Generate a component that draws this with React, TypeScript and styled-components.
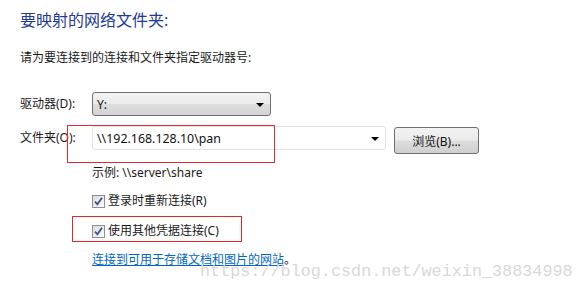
import React from 'react';
import styled, { createGlobalStyle } from 'styled-components';

const GlobalStyle = createGlobalStyle`
  html, body {
    margin: 0;
    padding: 0;
    background: #fff;
  }
  body {
    font-family: "Noto Sans", "Noto Sans CJK SC", sans-serif;
    font-size: 12px;
    color: #1a1a1a;
  }
`;

const Page = styled.div`
  position: relative;
  width: 584px;
  height: 292px;
  overflow: hidden;
  padding: 10px 0 0 20px;
  box-sizing: border-box;
`;

const Title = styled.div`
  font-size: 16px;
  line-height: 20px;
  color: #1d3a9b;
`;

const Intro = styled.div`
  margin-top: 20px;
  line-height: 16px;
`;

const Form = styled.div`
  margin-top: 26px;
  display: grid;
  grid-template-columns: 72px auto;
  grid-template-rows: 24px 28px;
  row-gap: 10px;
  align-items: start;
`;

const Label = styled.div`
  line-height: 24px;
`;

const Row = styled.div`
  display: flex;
  align-items: flex-start;
  gap: 8px;
`;

type SelectProps = {
  $width: number;
  $editable?: boolean;
};

const Select = styled.div<SelectProps>`
  position: relative;
  box-sizing: border-box;
  width: ${({ $width }) => $width}px;
  height: 24px;
  padding: 0 20px 0 4px;
  display: flex;
  align-items: center;
  border-radius: 3px;
  border: 1px solid ${({ $editable }) => ($editable ? '#dde3ea' : '#707070')};
  background: ${({ $editable }) =>
    $editable ? '#fff' : 'linear-gradient(#f3f3f3 0%, #ebebeb 48%, #dddddd 52%, #d4d4d4 100%)'};
  font-size: ${({ $editable }) => ($editable ? '12.4px' : '12px')};
  color: #111;
`;

const Arrow = styled.span`
  position: absolute;
  right: 6px;
  top: 10px;
  width: 0;
  height: 0;
  border-left: 4px solid transparent;
  border-right: 4px solid transparent;
  border-top: 4px solid #000;
`;

const Button = styled.button`
  box-sizing: border-box;
  margin-top: 1px;
  width: 85px;
  height: 27px;
  border: 1px solid #707070;
  border-radius: 3px;
  background: linear-gradient(#f2f2f2 0%, #ebebeb 48%, #dddddd 52%, #cfcfcf 100%);
  font-family: "Noto Sans", "Noto Sans CJK SC", sans-serif;
  font-size: 12px;
  color: #111;
  padding: 0;
`;

const Options = styled.div`
  margin-left: 72px;
  display: flex;
  flex-direction: column;
`;

type LineProps = {
  $top: number;
};

const Line = styled.div<LineProps>`
  margin-top: ${({ $top }) => $top}px;
  line-height: 16px;
  display: flex;
  align-items: center;
  gap: 3px;
`;

const Box = styled.span`
  box-sizing: border-box;
  width: 13px;
  height: 13px;
  border: 1px solid #8e8f8f;
  background: linear-gradient(135deg, #dcdcdc, #fbfbfb);
  display: inline-flex;
  align-items: center;
  justify-content: center;
`;

const Link = styled.a`
  color: #0066cc;
  text-decoration: underline;
`;

const Mark = styled.div<{ $x: number; $y: number; $w: number; $h: number }>`
  position: absolute;
  left: ${({ $x }) => $x}px;
  top: ${({ $y }) => $y}px;
  width: ${({ $w }) => $w}px;
  height: ${({ $h }) => $h}px;
  box-sizing: border-box;
  border: 1px solid #e8262b;
  pointer-events: none;
`;

const Watermark = styled.div`
  position: absolute;
  left: 200px;
  top: 262px;
  font-family: "Liberation Mono", monospace;
  font-size: 16.8px;
  line-height: 20px;
  color: #d8d8d8;
  white-space: nowrap;
`;

const Check: React.FC<{ label: string; top: number }> = ({ label, top }) => (
  <Line $top={top}>
    <Box>
      <svg width="9" height="9" viewBox="0 0 9 9">
        <path d="M1 4.6 L3.4 7.3 L8 0.8" fill="none" stroke="#3b4f93" strokeWidth="1.7" />
      </svg>
    </Box>
    <span>{label}</span>
  </Line>
);

export default function App() {
  return (
    <>
      <GlobalStyle />
      <Page>
        <Title>要映射的网络文件夹:</Title>
        <Intro>请为要连接到的连接和文件夹指定驱动器号:</Intro>
        <Form>
          <Label>驱动器(D):</Label>
          <Select $width={179}>
            Y:
            <Arrow />
          </Select>
          <Label>文件夹(O):</Label>
          <Row>
            <Select $width={294} $editable>
              \\192.168.128.10\pan
              <Arrow />
            </Select>
            <Button>浏览(B)...</Button>
          </Row>
        </Form>
        <Options>
          <Line $top={11}>示例: \\server\share</Line>
          <Check label="登录时重新连接(R)" top={12} />
          <Check label="使用其他凭据连接(C)" top={14} />
          <Line $top={13}>
            <span>
              <Link>连接到可用于存储文档和图片的网站</Link>。
            </span>
          </Line>
        </Options>
        <Mark $x={67} $y={125} $w={208} $h={38} />
        <Mark $x={72} $y={216} $w={170} $h={26} />
        <Watermark>https://blog.csdn.net/weixin_38834998</Watermark>
      </Page>
    </>
  );
}
